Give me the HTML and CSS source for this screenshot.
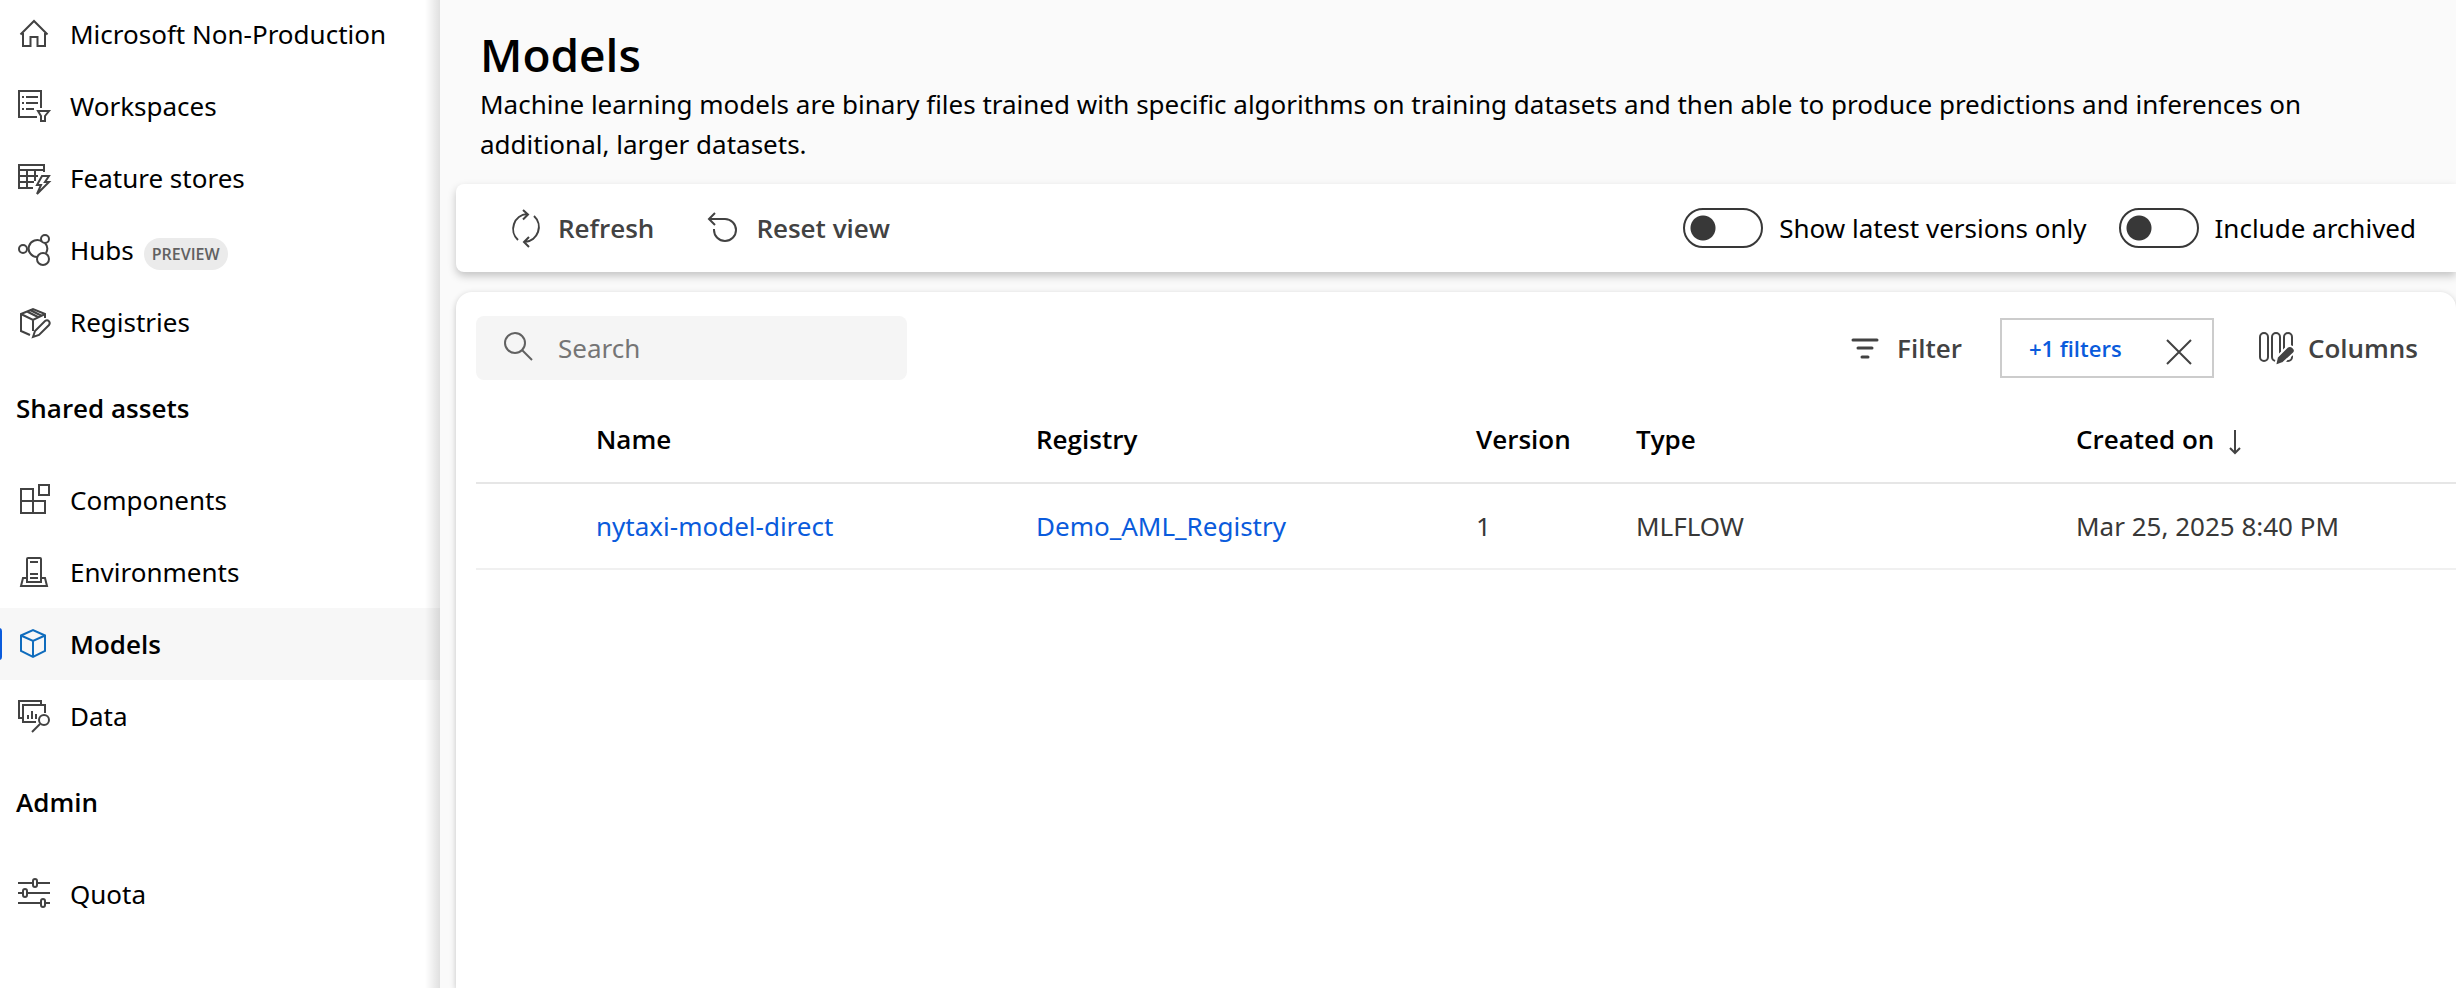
FILE: index.html
```html
<!DOCTYPE html>
<html lang="en">
<head>
<meta charset="utf-8">
<title>Models</title>
<link rel="stylesheet" href="styles.css">
</head>
<body>
<div class="app">
  <nav class="sidebar">
    <a class="nav-item" href="#"><svg class="icon" viewBox="0 0 36 36"><path d="M2.500 18.500 16 5l13.500 13.500M5 17v13h7.500v-9h7v9H27V17"/></svg><span>Microsoft Non-Production</span></a>
    <a class="nav-item" href="#"><svg class="icon" viewBox="0 0 36 36"><path d="M19 29H1V3h22v17M4 9h2m2 0h12M4 15h2m2 0h12M4 21h2m2 0h8"/><path d="M20 23h11l-4 5v5h-4v-5z"/></svg><span>Workspaces</span></a>
    <a class="nav-item" href="#"><svg class="icon" viewBox="0 0 36 36"><path d="M15 28H1V5h25v7M1 10h25M1 16h19M1 22h15M9 10v18M17 10v11"/><path d="M24 16h7l-4 6h4L19 34l4-9h-4z"/></svg><span>Feature stores</span></a>
    <a class="nav-item" href="#"><svg class="icon" viewBox="0 0 36 36"><circle cx="5" cy="17" r="4"/><circle cx="27" cy="7" r="4"/><circle cx="25" cy="27" r="6"/><path d="M19 25a8.500 8.500 0 1 1 5-15.500M27 11a8.500 8.500 0 0 1 1 10"/></svg><span>Hubs</span><span class="badge">PREVIEW</span></a>
    <a class="nav-item" href="#"><svg class="icon" viewBox="0 0 36 36"><path d="M12 31 3 27V10l12-5 12 5v4M3 10l12 6 12-6M15 16v11M9 7.500l12 6M12 6l12 6"/><path d="M15 33l2-6 10-10c3-2 6 1 4 4L21 31z"/></svg><span>Registries</span></a>
    <h2 class="nav-heading">Shared assets</h2>
    <a class="nav-item" href="#"><svg class="icon" viewBox="0 0 36 36"><path d="M3 7h12v24H3zM3 19h24v12H3M21 3h10v10H21z"/></svg><span>Components</span></a>
    <a class="nav-item" href="#"><svg class="icon" viewBox="0 0 36 36"><path d="M9 28V5q0-1 1-1h12q1 0 1 1v23zM12 8h8M12 20h8M12 24h8M9 24H5L3 32h26l-2-8h-4"/></svg><span>Environments</span></a>
    <a class="nav-item selected" href="#" aria-current="page"><svg class="icon" viewBox="0 0 36 36"><path d="M3 9.500 15 4l12 5.500V25l-12 6-12-6zM3 9.500 15 15l12-5.500M15 15v16"/></svg><span>Models</span></a>
    <a class="nav-item" href="#"><svg class="icon" viewBox="0 0 36 36"><path d="M5 20H1V3h22v4"/><path d="M18 24H5V7h22v8M10 17v4M14 13v8M18 16v5"/><circle cx="26" cy="22" r="5"/><path d="M22 26l-8 8"/></svg><span>Data</span></a>
    <h2 class="nav-heading">Admin</h2>
    <a class="nav-item" href="#"><svg class="icon" viewBox="0 0 36 36"><path d="M0 7h14m6 0h12M0 17h4m6 0h22M0 27h22m6 0h4"/><rect x="15" y="3" width="4" height="8" rx="2"/><rect x="5" y="13" width="4" height="8" rx="2"/><rect x="23" y="23" width="4" height="8" rx="2"/></svg><span>Quota</span></a>
  </nav>
  <main class="main">
    <header class="page-head">
      <h1>Models</h1>
      <p>Machine learning models are binary files trained with specific algorithms on training datasets and then able to produce predictions and inferences on additional, larger datasets.</p>
    </header>
    <section class="toolbar">
      <button class="command" type="button"><svg class="icon" viewBox="0 0 36 40"><path d="M10 32A15 15 0 0 1 19 6M15 2l5 4.500-5 5M26 8a15 15 0 0 1-9 26M21 29l-5 5 5 5"/></svg>Refresh</button>
      <button class="command" type="button"><svg class="icon" viewBox="0 0 36 40"><path d="M3 11h16a11 11 0 1 1-11 11v-1M9 5 3 11l6 6"/></svg>Reset view</button>
      <div class="toggles">
        <label class="toggle"><input type="checkbox" role="switch">Show latest versions only</label>
        <label class="toggle"><input type="checkbox" role="switch">Include archived</label>
      </div>
    </section>
    <section class="panel">
      <div class="panel-tools">
        <label class="search"><svg class="icon" viewBox="0 0 36 36"><circle cx="15" cy="13" r="10"/><path d="M22 20l10 10"/></svg><input type="search" placeholder="Search" aria-label="Search"></label>
        <button class="command filter" type="button"><svg class="icon bars" viewBox="0 0 36 36"><path d="M6 10h24M11 18h14M15 27h6"/></svg>Filter</button>
        <div class="chip"><button class="chip-label" type="button">+1 filters</button><button class="chip-close" type="button" aria-label="Clear filters"><svg viewBox="0 0 26 26"><path d="M1 1l24 24M25 1 1 25"/></svg></button></div>
        <button class="command columns" type="button"><svg class="icon" viewBox="0 0 36 38"><rect x="2" y="4" width="8" height="28" rx="4"/><rect x="14" y="4" width="8" height="28" rx="4"/><rect x="26" y="4" width="8" height="28" rx="4"/><path class="pencil" d="M17 37l2-9 10-10c4-3 10 2 7 6L25 34z"/></svg>Columns</button>
      </div>
      <table class="grid">
        <colgroup><col class="c-check"><col class="c-wide"><col class="c-wide"><col class="c-narrow"><col class="c-wide"><col></colgroup>
        <thead><tr><td></td><th>Name</th><th>Registry</th><th>Version</th><th>Type</th><th>Created on <svg class="sort" viewBox="0 0 16 26"><path d="M8 1v23M3 19l5 5 5-5"/></svg></th></tr></thead>
        <tbody><tr><td></td><td><a href="#">nytaxi-model-direct</a></td><td><a href="#">Demo_AML_Registry</a></td><td>1</td><td>MLFLOW</td><td>Mar 25, 2025 8:40 PM</td></tr></tbody>
      </table>
    </section>
  </main>
</div>
</body>
</html>
```
FILE: styles.css
```css
* { box-sizing: border-box; }
body { margin: 0; font: 26px/40px "Noto Sans", "Open Sans", sans-serif; color: #000; background: #fafafa; }
h1, h2, p { margin: 0; }
button, input { font: inherit; color: inherit; }
button { border: 0; background: none; padding: 0; }
a { text-decoration: none; }
svg { fill: none; stroke: #424242; stroke-width: 2; flex: none; }
h1, h2, th, .command, .selected, .badge, .chip-label { font-family: "Open Sans", "Noto Sans", sans-serif; font-weight: 600; }
.app { display: flex; min-height: 100vh; overflow: hidden; }
.sidebar { flex: 0 0 440px; margin-top: -2px; background: linear-gradient(to right, rgb(0 0 0 / 0) 425px, rgb(0 0 0 / 12%) 440px), #fff; }
.nav-item { display: flex; align-items: center; height: 72px; padding-left: 18px; color: #000; }
.nav-item .icon { width: 36px; height: 36px; margin-right: 16px; }
.badge { margin: 8px 0 0 10px; padding: 0 8px; border-radius: 16px; background: #ebebeb; color: #616161; font-size: 16px; line-height: 32px; }
.nav-heading { padding: 30px 16px 36px; font-size: 26px; line-height: 40px; }
.selected { position: relative; background: rgb(0 0 0 / 3%); }
.selected::before { content: ""; position: absolute; left: -4px; top: 20px; width: 6px; height: 32px; border-radius: 4px; background: #0a5bdc; }
.selected svg { stroke: #0f6cbd; }
.main { flex: 1; min-width: 0; display: flex; flex-direction: column; padding-left: 16px; }
.page-head { padding: 24px 24px 20px; }
h1 { font-size: 46px; line-height: 60px; }
.page-head p { max-width: 1900px; }
.toolbar { display: flex; align-items: center; height: 88px; padding: 0 40px 0 52px; border-radius: 8px 0 0 8px; background: #fff; box-shadow: 0 4px 8px rgb(0 0 0 / 22%); }
.command { display: flex; align-items: center; gap: 14px; color: #424242; }
.command .icon { width: 36px; height: 40px; }
.toolbar .command { margin-right: 52px; }
.toggles { display: flex; gap: 32px; margin-left: auto; }
.toggle { display: flex; align-items: center; gap: 16px; }
.toggle input { appearance: none; width: 80px; height: 40px; margin: 0; border: 2px solid #383838; border-radius: 20px; background: radial-gradient(circle at 18px 18px, #383838 12px, transparent 13px); }
.panel { flex: 1; margin-top: 20px; padding: 24px 0 0 20px; border-radius: 16px 16px 0 0; background: #fff; box-shadow: 0 2px 6px rgb(0 0 0 / 22%); }
.panel-tools { display: flex; align-items: center; height: 64px; padding-right: 38px; }
.search { display: flex; align-items: center; width: 431px; height: 64px; padding: 0 24px; gap: 22px; border-radius: 8px; background: #f5f5f5; }
.search .icon { width: 36px; height: 36px; stroke: #616161; }
.search input { flex: 1; min-width: 0; border: 0; padding: 0; background: none; outline: 0; }
.search input::placeholder { color: #757575; }
.filter { margin-left: auto; }
.bars { stroke-width: 3; stroke-linecap: round; }
.pencil { fill: #424242; stroke: #fff; }
.chip { display: flex; align-items: center; justify-content: space-between; width: 214px; height: 60px; margin: 0 44px 0 38px; padding: 0 20px 0 27px; border: 2px solid #ccc; }
.chip-label { color: #0a5bdc; font-size: 22px; }
.chip-close { padding-top: 8px; }
.chip-close svg { display: block; width: 26px; height: 26px; }
.grid { width: 100%; margin-top: 16px; border-collapse: collapse; table-layout: fixed; }
.c-check { width: 120px; }
.c-wide { width: 440px; }
.c-narrow { width: 160px; }
.grid th, .grid td { height: 86px; padding: 0; text-align: left; white-space: nowrap; color: #383838; border-bottom: 2px solid #f0f0f0; }
.grid thead th, .grid thead td { height: 87px; color: #000; border-color: #e6e6e6; }
.grid a { color: #0a5bdc; }
.sort { width: 16px; height: 26px; margin-left: 6px; vertical-align: middle; }
```
